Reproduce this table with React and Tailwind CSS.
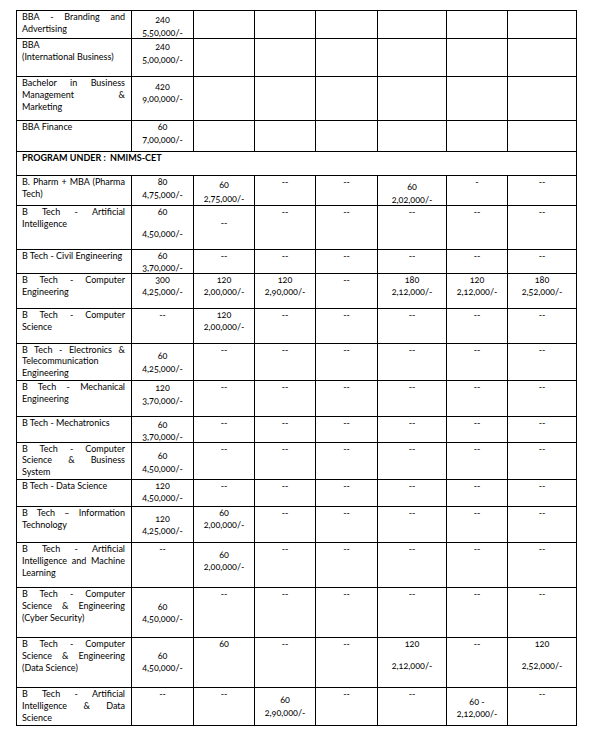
import React from 'react';

// Fee table: one grid row per programme, 8 fixed columns
const COLS = 'grid grid-cols-[115px_62px_61px_61px_62px_69px_61px_69px]';

const E = null;
const D = { l: ['--'] };

const rows = [
  { h: 'h-[28px]', name: ['BBA - Branding and', 'Advertising'], cells: [{ pt: 'pt-[3px]', gap: 'gap-[1px]', l: ['240', '5,50,000/-'] }, E, E, E, E, E, E] },
  { h: 'h-[38px]', name: ['BBA', '(International Business)'], cells: [{ pt: 'pt-[2px]', gap: 'gap-[1px]', l: ['240', '5,00,000/-'] }, E, E, E, E, E, E] },
  { h: 'h-[44px]', name: ['Bachelor in Business', 'Management &', 'Marketing'], cells: [{ pt: 'pt-[4px]', l: ['420', '9,00,000/-'] }, E, E, E, E, E, E] },
  { h: 'h-[31px]', name: ['BBA Finance'], cells: [{ l: ['60', '7,00,000/-'], gap: 'gap-[1px]' }, E, E, E, E, E, E] },
  { header: 'PROGRAM UNDER :\u00a0 NMIMS-CET', h: 'h-[24px]' },
  {
    h: 'h-[30px]',
    name: ['B. Pharm + MBA (Pharma', 'Tech)'],
    cells: [
      { l: ['80', '4,75,000/-'], gap: 'gap-[1px]' },
      { pt: 'pt-[3px]', gap: 'gap-[2px]', l: ['60', '2,75,000/-'] },
      D,
      D,
      { pt: 'pt-[5px]', gap: 'gap-[1px]', l: ['60', '2,02,000/-'] },
      { l: ['-'] },
      D,
    ],
  },
  { h: 'h-[44px]', name: ['B Tech - Artificial', 'Intelligence'], cells: [{ gap: 'gap-[10px]', l: ['60', '4,50,000/-'] }, { pt: 'pt-[11px]', l: ['--'] }, D, D, D, D, D] },
  { h: 'h-[24px]', name: ['B Tech - Civil Engineering'], cells: [{ l: ['60', '3,70,000/-'] }, D, D, D, D, D, D] },
  {
    h: 'h-[35px]',
    name: ['B Tech - Computer', 'Engineering'],
    cells: [
      { l: ['300', '4,25,000/-'] },
      { l: ['120', '2,00,000/-'] },
      { l: ['120', '2,90,000/-'] },
      D,
      { l: ['180', '2,12,000/-'] },
      { l: ['120', '2,12,000/-'] },
      { l: ['180', '2,52,000/-'] },
    ],
  },
  { h: 'h-[35px]', name: ['B Tech - Computer', 'Science'], cells: [D, { l: ['120', '2,00,000/-'] }, D, D, D, D, D] },
  { h: 'h-[37px]', tight: true, name: ['B Tech - Electronics &', 'Telecommunication', 'Engineering'], cells: [{ pt: 'pt-[6px]', gap: 'gap-[1px]', l: ['60', '4,25,000/-'] }, D, D, D, D, D, D] },
  { h: 'h-[36px]', name: ['B Tech - Mechanical', 'Engineering'], cells: [{ pt: 'pt-[1px]', gap: 'gap-[1px]', l: ['120', '3,70,000/-'] }, D, D, D, D, D, D] },
  { h: 'h-[26px]', name: ['B Tech - Mechatronics'], cells: [{ pt: 'pt-[2px]', l: ['60', '3,70,000/-'] }, D, D, D, D, D, D] },
  { h: 'h-[37px]', tight: true, name: ['B Tech - Computer', 'Science & Business', 'System'], cells: [{ pt: 'pt-[7px]', gap: 'gap-[1px]', l: ['60', '4,50,000/-'] }, D, D, D, D, D, D] },
  { h: 'h-[27px]', name: ['B Tech - Data Science'], cells: [{ l: ['120', '4,50,000/-'] }, D, D, D, D, D, D] },
  { h: 'h-[36px]', name: ['B Tech \u2013 Information', 'Technology'], cells: [{ pt: 'pt-[6px]', l: ['120', '4,25,000/-'] }, { l: ['60', '2,00,000/-'] }, D, D, D, D, D] },
  { h: 'h-[45px]', name: ['B Tech - Artificial', 'Intelligence and Machine', 'Learning'], cells: [D, { pt: 'pt-[6px]', l: ['60', '2,00,000/-'] }, D, D, D, D, D] },
  { h: 'h-[50px]', name: ['B Tech - Computer', 'Science & Engineering', '(Cyber Security)'], cells: [{ pt: 'pt-[13px]', l: ['60', '4,50,000/-'] }, D, D, D, D, D, D] },
  {
    h: 'h-[50px]',
    name: ['B Tech - Computer', 'Science & Engineering', '(Data Science)'],
    cells: [
      { pt: 'pt-[12px]', l: ['60', '4,50,000/-'] },
      { l: ['60'] },
      D,
      D,
      { gap: 'gap-[10px]', l: ['120', '2,12,000/-'] },
      D,
      { gap: 'gap-[10px]', l: ['120', '2,52,000/-'] },
    ],
  },
  {
    h: 'h-[38px]',
    name: ['B Tech - Artificial', 'Intelligence & Data', 'Science'],
    cells: [D, D, { pt: 'pt-[6px]', gap: 'gap-[1px]', l: ['60', '2,90,000/-'] }, D, D, { pt: 'pt-[8px]', l: ['60 -', '2,12,000/-'] }, D],
  },
];

function NameCell({ lines, tight }) {
  return (
    <div className={`border-r border-black pl-[5px] pr-[6px] text-[9px] ${tight ? 'leading-[11.3px]' : 'leading-[12px]'}`}>
      {lines.map((line, i) => (
        <div
          key={i}
          className={i < lines.length - 1 ? 'text-justify [text-align-last:justify]' : ''}
        >
          {line}
        </div>
      ))}
    </div>
  );
}

function ValueCell({ cell }) {
  if (!cell) return <div className="border-r border-black" />;
  return (
    <div className={`flex flex-col items-center border-r border-black text-[9px] leading-[12px] [font-feature-settings:'onum'] ${cell.pt || ''} ${cell.gap || ''}`}>
      {cell.l.map((v, i) => (
        <span key={i}>{v}</span>
      ))}
    </div>
  );
}

export default function App() {
  return (
    <div className="min-h-[737px] w-[596px] bg-white pl-[16px] pt-[10px] font-['Lato',sans-serif] text-black">
      <div className="w-[561px] border-l border-t border-black">
        {rows.map((row, i) =>
          row.header ? (
            <div key={i} className={`${row.h} border-b border-r border-black pl-[5px] text-[9px] font-bold leading-[12px]`}>
              {row.header}
            </div>
          ) : (
            <div key={i} className={`${COLS} ${row.h} border-b border-black`}>
              <NameCell lines={row.name} tight={row.tight} />
              {row.cells.map((c, j) => (
                <ValueCell key={j} cell={c} />
              ))}
            </div>
          )
        )}
      </div>
    </div>
  );
}
